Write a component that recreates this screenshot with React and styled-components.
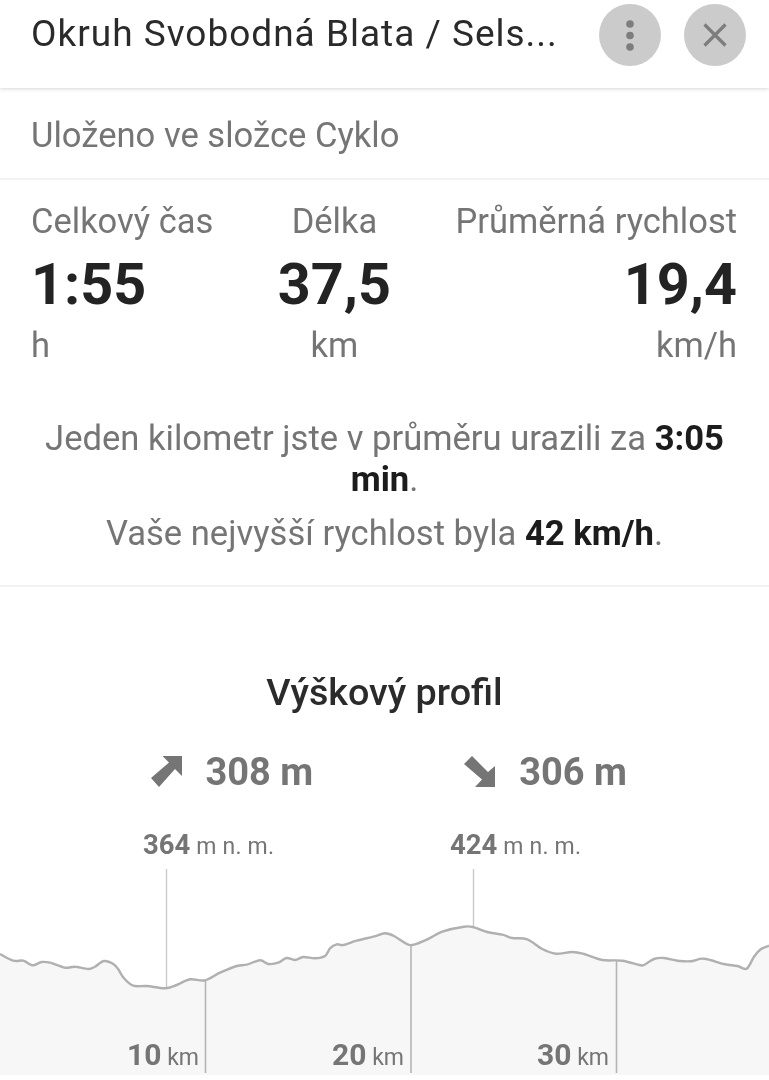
import React from 'react';
import styled, { createGlobalStyle } from 'styled-components';

const Global = createGlobalStyle`
  html, body { margin: 0; padding: 0; background: #fff; }
  body { font-family: Roboto, "Noto Sans", sans-serif; overflow: hidden; }
`;
const Page = styled.div`
  width: 769px; height: 1080px; display: flex; flex-direction: column; overflow: hidden; background: #fff;
  will-change: transform;
`;
const Header = styled.header`
  height: 88px; box-sizing: border-box; flex: none; display: flex; align-items: flex-start;
  padding: 4px 23px 0 31px; box-shadow: 0 1px 4px rgba(0,0,0,.16); position: relative;
`;
const Title = styled.h1`
  margin: 0; flex: 1; font-size: 37px; letter-spacing: 1px; font-weight: 400; line-height: 60px; color: #2a2a2a; white-space: nowrap;
`;
const RoundButton = styled.button`
  width: 62px; height: 62px; border: 0; border-radius: 50%; background: #cbcbcb; padding: 0;
  margin-left: 23px; display: flex; align-items: center; justify-content: center; flex: none;
`;
const FolderRow = styled.div`
  height: 92px; box-sizing: border-box; flex: none; display: flex; align-items: center; padding: 4px 31px 0;
  font-size: 34.6px; color: #757575; border-bottom: 2px solid #f2f2f2;
`;
const Stats = styled.div`
  display: flex; justify-content: space-between; padding: 19px 32px 0 31px; flex: none;
`;
const Stat = styled.div`
  display: flex; flex-direction: column; align-items: ${p => p.$align};
`;
const StatLabel = styled.div`
  font-size: 34.5px; line-height: 44px; color: #757575;
`;
const StatValue = styled.div`
  font-size: 57.5px; font-weight: 700; line-height: 64px; color: #232323; margin-top: 10px;
`;
const StatUnit = styled.div`
  font-size: 34.5px; line-height: 44px; color: #757575; margin-top: 6px;
`;
const Summary = styled.div`
  height: 220px; box-sizing: border-box; flex: none; padding: 51px 32px 0; text-align: center; color: #757575;
  font-size: 34.6px; border-bottom: 2px solid #f2f2f2;
`;
const SummaryLine = styled.p`
  margin: ${p => p.$top}px 0 0; line-height: 41px;
  b { color: #1c1c1c; font-weight: 700; }
`;
const ProfileTitle = styled.h2`
  margin: 80px 0 0; font-size: 37.7px; font-weight: 500; line-height: 50px; text-align: center; color: #2b2b2b; flex: none;
`;
const Climbs = styled.div`
  display: flex; flex: none; margin-top: 29px; height: 52px; padding-left: 150.5px; gap: 151px;
`;
const Climb = styled.div`
  display: flex; align-items: center; gap: 23px; font-size: 38px; font-weight: 700; color: #757575;
`;
const Chart = styled.div`
  position: relative; flex: 1; margin-top: 27px;
`;
const ChartSvg = styled.svg`
  position: absolute; left: 0; top: 0; display: block;
`;
const Elevation = styled.div`
  position: absolute; left: ${p => p.$x}px; top: 6px; font-size: 23px; line-height: 28px; color: #757575; white-space: nowrap;
  letter-spacing: .2px;
  b { font-size: 27.5px; font-weight: 700; letter-spacing: 0; }
`;
const Distance = styled.div`
  position: absolute; right: ${p => 769 - p.$x}px; top: 215px; font-size: 23px; line-height: 30px; color: #757575; white-space: nowrap;
  b { font-size: 30px; font-weight: 700; }
`;

const left = [[0,192],[40,212],[70,212],[97,226],[125,216],[150,218],[195,233],[225,230],[265,237],[285,230],[312,213],[340,222],[355,238],[372,265],[400,287],[440,288],[495,295],[530,285],[570,268],[615,271],[660,248],[710,228],[740,224],[780,211],[805,222],[835,218],[860,204],[885,210],[910,201],[945,205],[975,198],[990,175],[1010,163],[1030,165],[1070,152],[1120,140],[1155,130]];
const right = [[30,138],[65,160],[85,165],[130,148],[175,125],[240,110],[270,112],[310,126],[355,134],[385,144],[430,148],[475,177],[515,191],[565,186],[600,192],[655,210],[715,212],[770,226],[785,222],[810,207],[840,204],[880,212],[920,214],[960,206],[1020,222],[1060,228],[1088,236],[1110,200],[1130,178],[1155,167]];
const CHART_TOP = 825;
const pts = [
  ...left.map(([x, y]) => [x / 3, 890 + y / 3 - CHART_TOP]),
  ...right.map(([x, y]) => [384 + x / 3, 890 + y / 3 - CHART_TOP]),
];
const f = n => n.toFixed(1);
const smooth = pts.reduce((d, p, i) => {
  if (i === 0) return `M${f(p[0])} ${f(p[1])}`;
  const p0 = pts[i - 2] || pts[i - 1];
  const p1 = pts[i - 1];
  const p3 = pts[i + 1] || p;
  const c1 = [p1[0] + (p[0] - p0[0]) / 6, p1[1] + (p[1] - p0[1]) / 6];
  const c2 = [p[0] - (p3[0] - p1[0]) / 6, p[1] - (p3[1] - p1[1]) / 6];
  return `${d} C${f(c1[0])} ${f(c1[1])} ${f(c2[0])} ${f(c2[1])} ${f(p[0])} ${f(p[1])}`;
}, '');
const area = `${smooth} L769 250 L0 250 Z`;

export default function App() {
  return (
    <Page>
      <Global />
      <Header>
        <Title>Okruh Svobodná Blata / Sels...</Title>
        <RoundButton aria-label="Více">
          <svg width="12" height="32" viewBox="0 0 12 32" fill="#7d7d7d">
            <circle cx="6" cy="5" r="3.8" /><circle cx="6" cy="16.5" r="3.8" /><circle cx="6" cy="28" r="3.8" />
          </svg>
        </RoundButton>
        <RoundButton aria-label="Zavřít">
          <svg width="24" height="24" viewBox="0 0 24 24" stroke="#7d7d7d" strokeWidth="3.2" fill="none">
            <path d="M1.5 1.5 L22.5 22.5 M22.5 1.5 L1.5 22.5" />
          </svg>
        </RoundButton>
      </Header>
      <FolderRow>Uloženo ve složce Cyklo</FolderRow>
      <Stats>
        <Stat $align="flex-start">
          <StatLabel>Celkový čas</StatLabel><StatValue>1:55</StatValue><StatUnit>h</StatUnit>
        </Stat>
        <Stat $align="center">
          <StatLabel>Délka</StatLabel><StatValue>37,5</StatValue><StatUnit>km</StatUnit>
        </Stat>
        <Stat $align="flex-end">
          <StatLabel>Průměrná rychlost</StatLabel><StatValue>19,4</StatValue><StatUnit>km/h</StatUnit>
        </Stat>
      </Stats>
      <Summary>
        <SummaryLine $top={0}>Jeden kilometr jste v průměru urazili za <b>3:05 min</b>.</SummaryLine>
        <SummaryLine $top={13}>Vaše nejvyšší rychlost byla <b>42 km/h</b>.</SummaryLine>
      </Summary>
      <ProfileTitle>Výškový profil</ProfileTitle>
      <Climbs>
        <Climb>
          <svg width="32" height="32" viewBox="0 0 32 32" fill="#757575">
            <path d="M11.5 0 H31 V20 L24 13 L8 31 L0 22 L18 6.5 Z" />
          </svg>
          308 m
        </Climb>
        <Climb>
          <svg width="32" height="32" viewBox="0 0 32 32" fill="#757575">
            <path d="M0 8 L8 0 L24 16 L31 10 V31 H11 L18 23.5 Z" />
          </svg>
          306 m
        </Climb>
      </Climbs>
      <Chart>
        <ChartSvg width="769" height="255" viewBox="0 0 769 255">
          <path d={area} fill="#f7f7f7" />
          <g stroke="#c9c9c9" strokeWidth="1.4">
            <line x1="166.5" y1="44" x2="166.5" y2="163" />
            <line x1="473.5" y1="44" x2="473.5" y2="102" />
          </g>
          <g stroke="#b5b5b5" strokeWidth="1.6">
            <line x1="205.5" y1="156" x2="205.5" y2="248" />
            <line x1="411" y1="120" x2="411" y2="248" />
            <line x1="616.5" y1="135" x2="616.5" y2="248" />
          </g>
          <path d={smooth} fill="none" stroke="#b0b0b0" strokeWidth="2.4" strokeLinejoin="round" />
        </ChartSvg>
        <Elevation $x={143}><b>364</b> m n. m.</Elevation>
        <Elevation $x={450}><b>424</b> m n. m.</Elevation>
        <Distance $x={199}><b>10</b> km</Distance>
        <Distance $x={404}><b>20</b> km</Distance>
        <Distance $x={609}><b>30</b> km</Distance>
      </Chart>
    </Page>
  );
}
